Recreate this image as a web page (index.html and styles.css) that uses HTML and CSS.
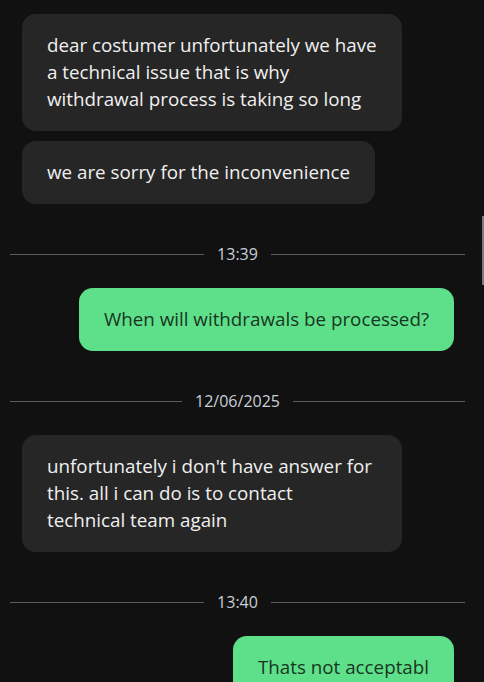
FILE: index.html
```html
<!DOCTYPE html>
<html lang="en">
<head>
    <meta charset="UTF-8">
    <meta name="viewport" content="width=device-width, initial-scale=1.0">
    <title>Support chat</title>
    <link rel="stylesheet" href="styles.css">
</head>
<body>
    <div class="chat">
        <div class="msg msg-in">dear costumer unfortunately we have a technical issue that is why withdrawal process is taking so long</div>
        <div class="msg msg-in">we are sorry for the inconvenience</div>

        <div class="divider"><span>13:39</span></div>
        <div class="msg msg-out">When will withdrawals be processed?</div>

        <div class="divider"><span>12/06/2025</span></div>
        <div class="msg msg-in">unfortunately i don't have answer for this. all i can do is to contact<br>technical team again</div>

        <div class="divider"><span>13:40</span></div>
        <div class="msg msg-out">Thats not acceptabl</div>
    </div>
    <div class="scroll-thumb"></div>
</body>
</html>
```

FILE: styles.css
```css
/* page */
html, body {
    margin: 0;
    height: 100%;
    overflow: hidden;
}

body {
    background: #111111;
    font-family: "Open Sans", "Noto Sans", Arial, sans-serif;
    color: #f2f2f2;
}

.chat {
    display: flex;
    flex-direction: column;
    padding: 14px 19px 0 10px;
}

/* bubbles */
.msg {
    font-size: 18.8px;
    line-height: 27px;
    padding: 18px 25px;
    border-radius: 14px;
    max-width: 330px;
}

.msg-in {
    align-self: flex-start;
    margin-left: 12px;
    background: #262626;
    color: #f0f0f0;
}

.msg-in + .msg-in {
    margin-top: 10px;
}

.msg-out {
    align-self: flex-end;
    margin-right: 11px;
    background: #5ee08a;
    color: #193522;
}

/* date / time separators */
.divider {
    display: flex;
    align-items: center;
    gap: 13px;
    height: 20px;
    margin: 40px 0 24px;
    font-size: 16px;
    color: #c9d0d8;
}

.divider::before,
.divider::after {
    content: "";
    flex: 1;
    height: 1px;
    background: #5c5c5c;
}

.scroll-thumb {
    position: absolute;
    top: 216px;
    right: 0;
    width: 2px;
    height: 69px;
    background: #7a7a7a;
}
```
